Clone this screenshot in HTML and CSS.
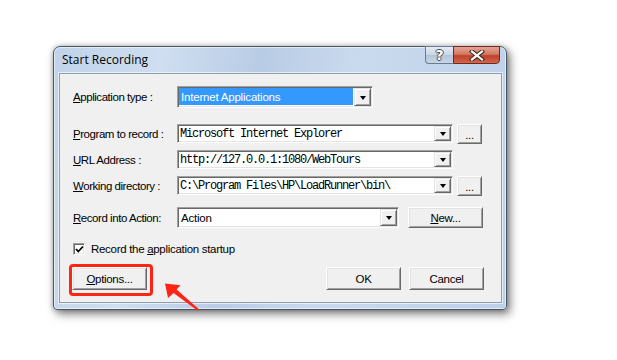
FILE: index.html
```html
<!DOCTYPE html>
<html>
<head>
<meta charset="utf-8">
<link rel="stylesheet" href="styles.css">
</head>
<body>
<div class="page">
  <div class="window">
    <div class="titlebar">
      <span class="title">Start Recording</span>
      <div class="caps">
        <span class="cap help">?</span>
        <span class="cap close">
          <svg width="16" height="11" viewBox="0 0 16 11"><path d="M3 1.5 L13 9.5 M13 1.5 L3 9.5" stroke="#3a2a26" stroke-width="4.2" stroke-linecap="square"/><path d="M3 1.5 L13 9.5 M13 1.5 L3 9.5" stroke="#ffffff" stroke-width="2.2" stroke-linecap="square"/></svg>
        </span>
      </div>
    </div>
    <div class="client">
      <div class="row r1">
        <span class="lbl"><u>A</u>pplication type :</span>
        <div class="combo c-app"><span class="val sel">Internet Applications</span><span class="dd"></span></div>
      </div>
      <div class="row r2">
        <span class="lbl"><u>P</u>rogram to record :</span>
        <div class="combo c-long"><span class="val mono">Microsoft Internet Explorer</span><span class="dd"></span></div>
        <button class="btn dots">...</button>
      </div>
      <div class="row r3">
        <span class="lbl"><u>U</u>RL Address :</span>
        <div class="combo c-long"><span class="val mono">http://127.0.0.1:1080/WebTours</span><span class="dd"></span></div>
      </div>
      <div class="row r3">
        <span class="lbl"><u>W</u>orking directory :</span>
        <div class="combo c-long"><span class="val mono">C:\Program Files\HP\LoadRunner\bin\</span><span class="dd"></span></div>
        <button class="btn dots">...</button>
      </div>
      <div class="row r5">
        <span class="lbl"><u>R</u>ecord into Action:</span>
        <div class="combo c-act"><span class="val">Action</span><span class="dd"></span></div>
        <button class="btn new"><u>N</u>ew...</button>
      </div>
      <div class="row r6">
        <span class="chk"><svg width="9" height="9" viewBox="0 0 9 9"><path d="M1 4 L3.3 6.5 L8 1.5" stroke="#000" stroke-width="1.8" fill="none"/></svg></span>
        <span class="chklbl">Record the <u>a</u>pplication startup</span>
      </div>
      <div class="row r7">
        <button class="btn opt"><u>O</u>ptions...</button>
        <button class="btn ok">OK</button>
        <button class="btn cancel">Cancel</button>
      </div>
      <div class="mark"></div>
    </div>
  </div>
  <svg class="arrow" width="617" height="360" viewBox="0 0 617 360"><polygon points="165,283.5 180.5,285.3 176.6,289.4 199,309.2 197.6,310.8 173.6,293 168,298" fill="#ff2515"/></svg>
</div>
</body>
</html>
```

FILE: styles.css
```css
html, body {
  margin: 0;
  padding: 0;
  background: #ffffff;
}

.page {
  position: relative;
  width: 617px;
  height: 360px;
  padding: 46px 0 0 53px;
  box-sizing: border-box;
}

.window {
  width: 454px;
  height: 264px;
  box-sizing: border-box;
  border: 1px solid #4a5666;
  border-radius: 7px 7px 4px 4px;
  background: linear-gradient(100deg, #c0d3ea 0%, #cfdef0 22%, #b9cce5 42%, #cadaee 62%, #bcd0e8 100%);
  box-shadow: inset 0 0 0 1px rgba(255,255,255,0.55), 3px 4px 10px rgba(0,0,0,0.5), 0 0 5px rgba(0,0,0,0.25);
  display: flex;
  flex-direction: column;
}

.titlebar {
  height: 26px;
  display: flex;
  align-items: flex-start;
  padding-left: 8px;
}

.title {
  font-family: "Open Sans", "Noto Sans", sans-serif;
  font-size: 12px;
  line-height: 16px;
  padding-top: 5px;
  color: #000;
  flex: 1;
}

.caps {
  display: flex;
  margin-top: -1px;
  margin-right: 6px;
}

.cap {
  height: 18px;
  box-sizing: border-box;
  display: flex;
  align-items: center;
  justify-content: center;
}

.help {
  width: 28px;
  border: 1px solid #6b7b90;
  border-right: none;
  border-radius: 0 0 0 4px;
  background: linear-gradient(#e4ecf6, #c9d6e6 50%, #b4c4d8 51%, #c8d6e6);
  font-family: "DejaVu Sans", sans-serif;
  font-weight: bold;
  font-size: 14px;
  color: #ffffff;
  text-shadow: 1px 0 0 #404c5c, -1px 0 0 #404c5c, 0 1px 0 #404c5c, 0 -1px 0 #404c5c;
}

.close {
  width: 47px;
  border: 1px solid #6e2a20;
  border-radius: 0 0 4px 0;
  background: linear-gradient(#e6a595, #d37862 45%, #c0412b 55%, #d2664c);
}

.client {
  position: relative;
  margin: 0 4px 5px 5px;
  border: 1px solid #8e9db0;
  box-shadow: 0 0 0 1px rgba(255,255,255,0.6);
  background: #f0f0f0;
  padding: 12px 17px 12px 13px;
  font-family: "Liberation Sans", Arial, sans-serif;
  font-size: 11px;
  color: #000;
}

.row {
  display: flex;
  align-items: center;
}

.r1 { height: 22px; }
.r2 { height: 19px; margin-top: 16px; }
.r3 { height: 19px; margin-top: 7px; }
.r5 { height: 21px; margin-top: 12px; }
.r6 { height: 12px; margin-top: 15px; }
.r7 { height: 23px; margin-top: 12px; margin-left: -1px; }

.lbl {
  width: 104px;
  flex: none;
  font-size: 11.5px;
  letter-spacing: -0.45px;
  white-space: nowrap;
}

.combo {
  height: 100%;
  box-sizing: border-box;
  display: flex;
  background: #ffffff;
  border-top: 1px solid #a0a0a0;
  border-left: 1px solid #a0a0a0;
  border-right: 1px solid #ffffff;
  border-bottom: 1px solid #ffffff;
  box-shadow: inset 1px 1px 0 #696969, inset -1px -1px 0 #e3e3e3;
  padding: 1px;
}

.c-app { width: 196px; }
.c-long { width: 276px; }
.c-act { width: 222px; }

.val {
  flex: 1;
  display: flex;
  align-items: center;
  padding-left: 2px;
  white-space: nowrap;
  overflow: hidden;
  font-size: 11.5px;
  letter-spacing: -0.2px;
}

.sel {
  background: #3399ff;
  color: #ffffff;
  margin: 0 1px 1px 0;
  padding-left: 2px;
}

.mono {
  font-family: "Liberation Mono", "Courier New", monospace;
  font-size: 12px;
  letter-spacing: -1.2px;
  padding-left: 1px;
}

.dd {
  width: 17px;
  flex: none;
  box-sizing: border-box;
  background: #f0f0f0;
  border-top: 1px solid #e3e3e3;
  border-left: 1px solid #e3e3e3;
  border-right: 1px solid #696969;
  border-bottom: 1px solid #696969;
  box-shadow: inset 1px 1px 0 #ffffff, inset -1px -1px 0 #a0a0a0;
  display: flex;
  align-items: center;
  justify-content: center;
}

.dd::after {
  content: "";
  width: 0;
  height: 0;
  border-top: 4px solid #000;
  border-left: 3.5px solid transparent;
  border-right: 3.5px solid transparent;
  margin-top: 1px;
}

.btn {
  box-sizing: border-box;
  height: 100%;
  background: #f0f0f0;
  font-family: "Liberation Sans", Arial, sans-serif;
  font-size: 11.5px;
  color: #000;
  padding: 0;
  margin: 0;
  border-top: 1px solid #ffffff;
  border-left: 1px solid #ffffff;
  border-right: 1px solid #696969;
  border-bottom: 1px solid #696969;
  box-shadow: inset 1px 1px 0 #e3e3e3, inset -1px -1px 0 #a0a0a0;
  border-radius: 0;
  letter-spacing: -0.3px;
}

.dots {
  width: 25px;
  margin-left: 4px;
  height: 20px;
  padding-top: 3px;
}

.new {
  width: 75px;
  margin-left: 9px;
}

.opt { width: 75px; }
.ok { width: 75px; margin-left: auto; }
.cancel { width: 75px; margin-left: 8px; }

.chk {
  width: 12px;
  height: 12px;
  box-sizing: border-box;
  background: #ffffff;
  border-top: 1px solid #a0a0a0;
  border-left: 1px solid #a0a0a0;
  border-right: 1px solid #ffffff;
  border-bottom: 1px solid #ffffff;
  box-shadow: inset 1px 1px 0 #696969, inset -1px -1px 0 #e3e3e3;
  display: flex;
  align-items: center;
  justify-content: center;
}

.chk svg { display: block; }

.chklbl {
  margin-left: 6px;
  font-size: 11.5px;
  letter-spacing: -0.3px;
}

.mark {
  position: absolute;
  left: 9px;
  top: 190px;
  width: 84px;
  height: 32px;
  box-sizing: border-box;
  border: 3px solid #ff2515;
  border-radius: 4px;
}

.arrow {
  position: absolute;
  left: 0;
  top: 0;
  pointer-events: none;
}
```
